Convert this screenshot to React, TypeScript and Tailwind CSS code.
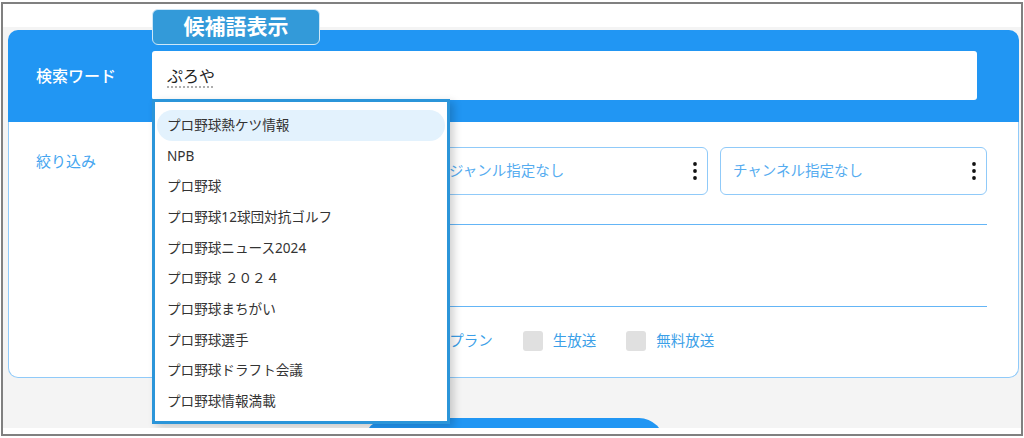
import React from 'react';

const suggestions = [
  'プロ野球熱ケツ情報',
  'NPB',
  'プロ野球',
  'プロ野球12球団対抗ゴルフ',
  'プロ野球ニュース2024',
  'プロ野球 ２０２４',
  'プロ野球まちがい',
  'プロ野球選手',
  'プロ野球ドラフト会議',
  'プロ野球情報満載',
];

// the first select and the first checkbox sit behind the dropdown
const selects = ['', 'ジャンル指定なし', 'チャンネル指定なし'];
const checks = ['', 'アニメ・映画見放題プラン', '生放送', '無料放送'];

function Kebab() {
  return (
    <svg width="4" height="18" viewBox="0 0 4 18" className="shrink-0">
      <circle cx="2" cy="2" r="1.9" fill="#111" />
      <circle cx="2" cy="9" r="1.9" fill="#111" />
      <circle cx="2" cy="16" r="1.9" fill="#111" />
    </svg>
  );
}

export default function App() {
  return (
    <div
      className="w-[1024px] h-[438px] bg-white pt-[2px] pl-[1px]"
      style={{ fontFamily: '"Noto Sans", "Noto Sans CJK JP", sans-serif' }}
    >
      <div className="relative w-[1022px] h-[434px] border-2 border-[#808080] flex flex-col">
        <div className="h-[23px] bg-white shrink-0" />

        <div className="h-[401px] shrink-0 bg-[#f4f4f4] pl-[5px] pr-[2px] pt-[3px] overflow-hidden">
          <div className="w-full">
            {/* search header */}
            <div className="h-[92px] bg-[#2196f3] rounded-t-[10px] flex items-start pt-[21px] pl-[28px]">
              <div className="w-[116px] h-[49px] flex items-center text-white text-[16px] font-medium">検索ワード</div>
              <div className="relative w-[825px] h-[49px]">
                <div className="h-full bg-white rounded-[3px] flex items-center pl-[15px] text-[16px] text-[#222]">
                  <span className="underline decoration-dotted decoration-[#999] underline-offset-[5px]">ぷろや</span>
                </div>

                {/* suggestion dropdown */}
                <div className="absolute z-20 left-0 top-[48px] w-[298px] h-[325px] bg-white border-[3px] border-[#2b95d9] shadow-[4px_3px_8px_rgba(0,0,0,0.18)] pt-[8px] px-[2px]">
                  {suggestions.map((s, i) => (
                    <div
                      key={s}
                      className={`h-[30.67px] flex items-center pl-[10px] text-[13.6px] text-[#333] rounded-full ${
                        i === 0 ? 'bg-[#e3f2fd]' : ''
                      }`}
                    >
                      {s}
                    </div>
                  ))}
                </div>
              </div>
            </div>

            {/* filters */}
            <div className="h-[256px] bg-white border border-t-0 border-[#90caf9] rounded-b-[10px] flex pt-[25px] pl-[27px]">
              <div className="w-[116px] mt-[3px] leading-[22px] text-[15px] text-[#45a6f0] self-start">絞り込み</div>
              <div className="w-[835px]">
                <div className="grid grid-cols-[272px_272px_267px] gap-3">
                  {selects.map((s, i) => (
                    <div
                      key={i}
                      className="h-[48px] border border-[#90caf9] rounded-[6px] flex items-center justify-between pl-[12px] pr-[10px]"
                    >
                      <span className="text-[14.5px] text-[#55acf0]">{s}</span>
                      <Kebab />
                    </div>
                  ))}
                </div>
                <div className="mt-[29px] h-[82px] border-t border-[#64b5f6]" />
                <div className="border-t border-[#64b5f6] pt-[23px] pl-[5px] flex items-center gap-[30px]">
                  {checks.map((c, i) => (
                    <div key={i} className="flex items-center gap-[10px]">
                      <span className="w-[20px] h-[20px] rounded-[3px] bg-[#e0e0e0]" />
                      {c ? (
                        <span className="text-[14.5px] text-[#3c9fe8]">{c}</span>
                      ) : (
                        <span className="w-[72px] h-[20px]" />
                      )}
                    </div>
                  ))}
                </div>
              </div>
            </div>
          </div>

          <div className="mt-[40px] mx-auto w-[300px] h-[50px] rounded-full bg-[#2196f3]" />
        </div>

        <div className="flex-1 bg-white" />

        {/* tab label */}
        <div className="absolute left-[149px] top-[5px] w-[168px] h-[36px] rounded-[6px] bg-[#339ad9] border border-[#cde7f8] flex items-center justify-center text-white text-[21px] font-bold">
          候補語表示
        </div>
      </div>
    </div>
  );
}
